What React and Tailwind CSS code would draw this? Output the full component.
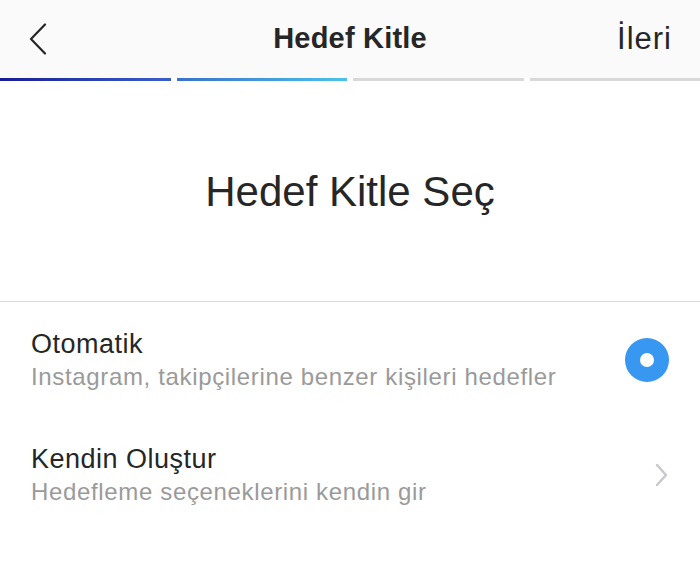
import React from 'react';

const font = { fontFamily: '"Liberation Sans", Arial, sans-serif' };

const Header = () => (
  <div className="bg-[#fafafa]">
    <div className="relative flex h-[78px] items-center justify-between px-[26px]">
      <button className="flex h-[34px] w-[24px] items-center justify-center text-[#262626]">
        <svg width="20" height="32" viewBox="0 0 20 32" fill="none">
          <path d="M17 1.5 L3 16 L17 30.5" stroke="currentColor" strokeWidth="2.2" strokeLinecap="round" strokeLinejoin="round" />
        </svg>
      </button>
      <h1 className="absolute left-1/2 -translate-x-1/2 text-[29px] font-bold text-[#262626] tracking-[0.2px]">
        Hedef Kitle
      </h1>
      <span className="pr-[2px] text-[31px] tracking-[1px] text-[#262626]">İleri</span>
    </div>
    {/* Step progress */}
    <div className="flex h-[3px] gap-[6px] bg-white">
      <div className="flex-1 bg-gradient-to-r from-[#1b1a96] to-[#3b5fc7]" />
      <div className="flex-1 bg-gradient-to-r from-[#3a70cb] to-[#4cc2e8]" />
      <div className="flex-1 bg-[#d8d8d8]" />
      <div className="flex-1 bg-[#d8d8d8]" />
    </div>
  </div>
);

const Option = ({ title, subtitle, children }) => (
  <div className="flex h-[115px] items-center justify-between pl-[31px] pr-[31px]">
    <div>
      <div className="text-[27px] leading-[32px] tracking-[0.5px] text-[#262626]">{title}</div>
      <div className="mt-[2px] text-[24px] leading-[30px] tracking-[0.65px] text-[#9a9a9a]">{subtitle}</div>
    </div>
    {children}
  </div>
);

export default function App() {
  return (
    <div className="h-[573px] w-[700px] overflow-hidden bg-white" style={font}>
      <Header />

      <div className="flex h-[220px] items-center justify-center">
        <h2 className="text-[42px] font-light text-[#262626]">Hedef Kitle Seç</h2>
      </div>

      <div className="border-t border-[#dbdbdb]">
        <Option title="Otomatik" subtitle="Instagram, takipçilerine benzer kişileri hedefler">
          <div className="flex h-[44px] w-[44px] items-center justify-center rounded-full bg-[#3897f0]">
            <div className="h-[14px] w-[14px] rounded-full bg-white" />
          </div>
        </Option>
        <Option title="Kendin Oluştur" subtitle="Hedefleme seçeneklerini kendin gir">
          <svg width="14" height="24" viewBox="0 0 14 24" fill="none" className="mr-[1px]">
            <path d="M3 2 L12 12 L3 22" stroke="#c7c7cc" strokeWidth="2.4" strokeLinecap="round" strokeLinejoin="round" />
          </svg>
        </Option>
      </div>
    </div>
  );
}
